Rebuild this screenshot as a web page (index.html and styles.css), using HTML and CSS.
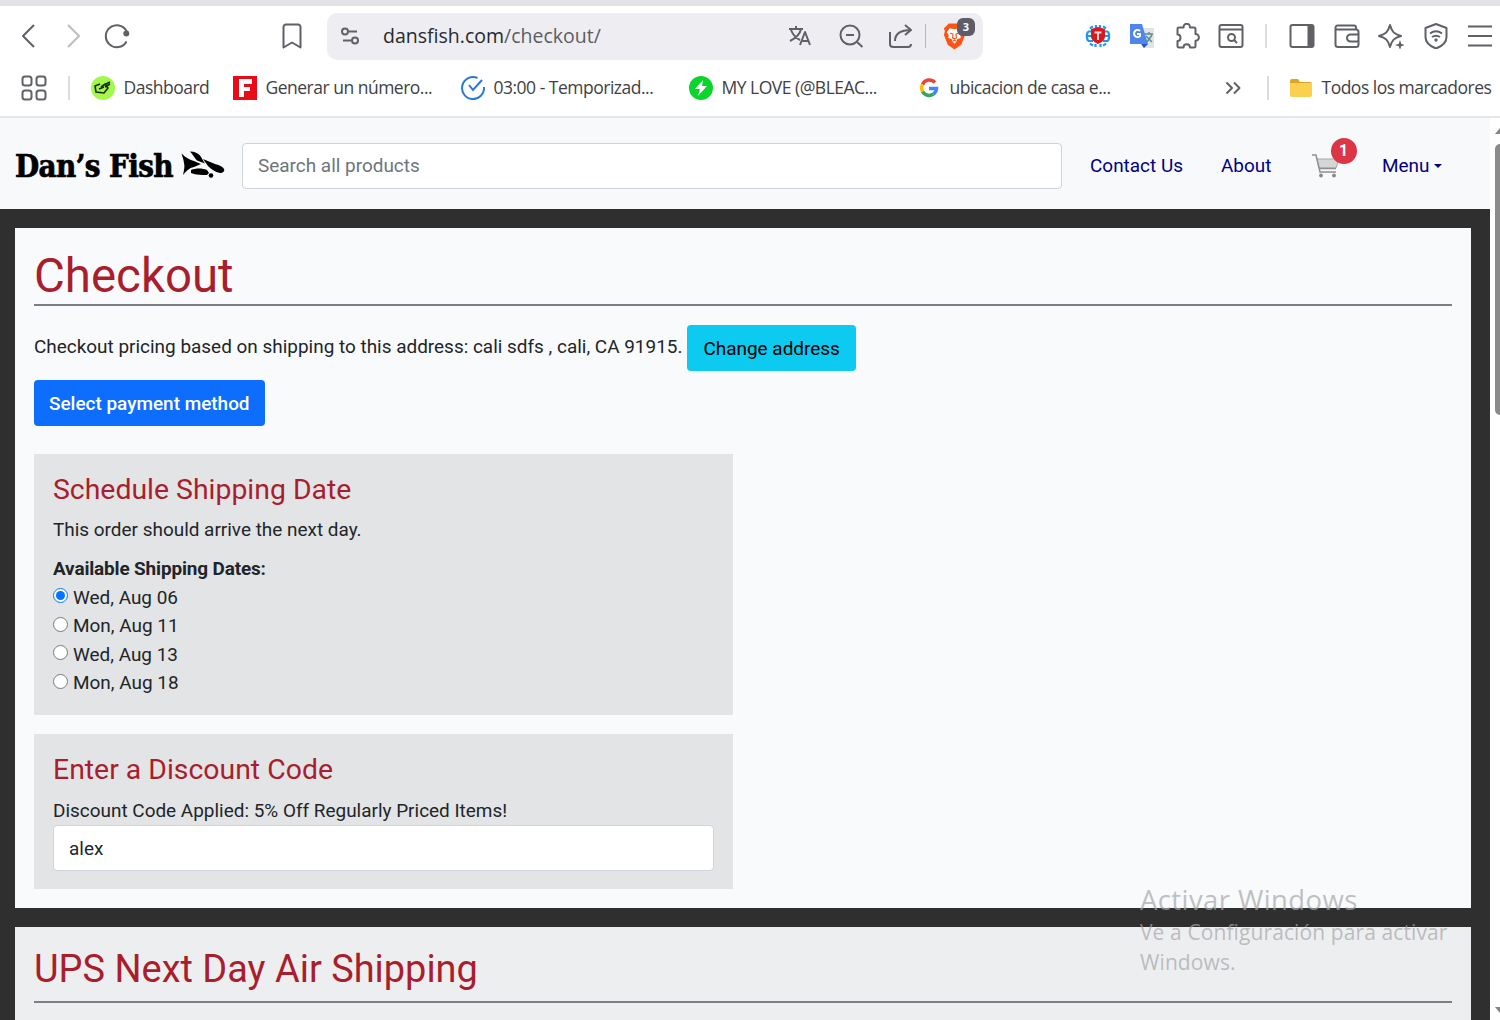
FILE: index.html
```html
<!DOCTYPE html>
<html lang="en">
<head>
    <meta charset="UTF-8">
    <meta name="viewport" content="width=device-width, initial-scale=1.0">
    <title>Checkout - Dan's Fish</title>
    <link rel="stylesheet" href="styles.css">
</head>
<body>

<!-- Browser bars -->
<div class="browser">
    <div class="toolbar">
        <div class="nav-icons">
            <svg class="icon" viewBox="0 0 26 26"><path d="M18 2 7 13l11 11"/></svg>
            <svg class="icon faded" viewBox="0 0 26 26"><path d="M8 2l11 11L8 24"/></svg>
            <svg class="icon" viewBox="0 0 26 26"><path d="M22.500 18.500a11 11 0 1 1 1-8"/><circle class="fill" cx="22.300" cy="10.500" r="2"/></svg>
        </div>
        <svg class="icon save" viewBox="0 0 26 26"><path d="M7 1.500h12a2.500 2.500 0 0 1 2.500 2.500v20.500L13 19.500l-8.500 5V4A2.500 2.500 0 0 1 7 1.500z"/></svg>
        <div class="address-bar">
            <svg class="icon tune" viewBox="0 0 26 26"><circle cx="8" cy="8.500" r="3"/><path d="M12 8.500h8M6 17.500h8"/><circle cx="18" cy="17.500" r="3"/></svg>
            <span class="url"><span class="host">dansfish.com</span>/checkout/</span>
            <div class="address-icons">
                <svg class="icon" viewBox="0 0 26 26"><path d="M2 6h14M9 3v3M4 7c2 5 5 8 9 10M14 6c-1 5-5 9-11 12M13 22l5-13 5 13M15 18h6"/></svg>
                <svg class="icon" viewBox="0 0 26 26"><circle cx="12" cy="12" r="9.500"/><path d="M8 12h8M19 19l5.500 5"/></svg>
                <svg class="icon" viewBox="0 0 26 26"><path d="M2 9v12a3 3 0 0 0 3 3h15a3 3 0 0 0 3-3M7 18c0-7 5-11 16-11M17 2l6 5-6 5"/></svg>
            </div>
            <span class="address-divider"></span>
            <div class="brave">
                <svg class="picture" viewBox="0 0 26 28"><path fill="#fb5417" d="M7 1h12l3 3 2 2-1 3 1 4-4 10-7 5-7-5L2 13l1-4-1-3 2-2z"/><path fill="#fff" d="M8 6l5 1 5-1 3 4-2 3 .5 3-3.500 1-1 3-2 2-2-2-1-3-3.500-1 .5-3-2-3z"/><path fill="none" stroke="#fb5417" stroke-width="1.200" d="M8.500 11l3 1-.5 4 2 1 2-1-.5-4 3-1M11 19.500l2-1 2 1"/></svg>
                <span class="brave-count">3</span>
            </div>
        </div>
        <div class="extensions">
            <svg class="picture" viewBox="0 0 26 26"><path fill="none" stroke="#2096f3" stroke-width="2.200" d="M8 3.500A11 11 0 0 0 5 5.500M18 3.500a11 11 0 0 1 3 2M8 22.500a11 11 0 0 1-3-2M18 22.500a11 11 0 0 0 3-2M3 8.500h4M19 8.500h4M1.500 13H6M20 13h4.500M3 18h5M18 18h5M11 2v3M15 2v3M10.500 24v-3M15.500 24v-3M3 8.500A11 11 0 0 0 3 18M23 8.500a11 11 0 0 1 0 9.500"/><path fill="#d71920" d="M13 4l7 2v7c0 4-3 6-7 8-4-2-7-4-7-8V6z"/><path stroke="#f6d5d5" stroke-width="2" d="M9.500 9.500h7M13 9v8"/></svg>
            <svg class="picture" viewBox="0 0 26 26"><path fill="#e2e3e5" d="M11 5h14v20H14z"/><path fill="#4f86ec" d="M1 1h12l6 20H1z"/><path fill="#2554c7" d="M12 21h7l-4 4z"/><path fill="none" stroke="#fff" stroke-width="2" d="M11 8a3.500 3.500 0 1 0 0 5v-2H8"/><path fill="none" stroke="#5e8c8c" stroke-width="1.500" d="M16 11h8M20 9v2M17 13l6 6M23 12l-5 7"/></svg>
            <svg class="icon" viewBox="0 0 26 26"><path d="M5 4.500h4.500V4a3 3 0 0 1 6.500 0v.5h4a1.500 1.500 0 0 1 1.500 1.500v5a3.400 3.400 0 0 1 0 6.800V23a1.500 1.500 0 0 1-1.500 1.500h-4c0-4.500-6.500-4.500-6.500 0H5A1.500 1.500 0 0 1 3.500 23v-5c4 0 4-6.500 0-6.500V6A1.500 1.500 0 0 1 5 4.500z"/></svg>
            <svg class="icon" viewBox="0 0 26 26"><rect x="1.500" y="2" width="23" height="22" rx="2"/><path d="M2 6.500h22"/><circle cx="13.500" cy="14.500" r="3.500"/><path d="M16 17l3 3"/></svg>
        </div>
        <span class="divider"></span>
        <div class="extensions">
            <svg class="icon" viewBox="0 0 26 26"><rect x="1.500" y="2" width="23" height="22" rx="2"/><path class="fill" d="M19.500 3H24v20h-4.500z"/></svg>
            <svg class="icon" viewBox="0 0 26 26"><path d="M2 6.500h20a2.500 2.500 0 0 1 2.500 2.500v12.500A2.500 2.500 0 0 1 22 24H4a2.500 2.500 0 0 1-2.500-2.500v-17A2 2 0 0 1 3.500 2.500H20a2 2 0 0 1 2 2v2"/><path d="M24.500 11.500h-8a3.500 3.500 0 0 0 0 7h8"/></svg>
            <svg class="icon" viewBox="0 0 26 26"><path d="M12 2c2 7 4 9 11 11-7 2-9 4-11 11-2-7-4-9-11-11 7-2 9-4 11-11z"/><path class="halo" d="M17 17h9v9h-9z"/><path class="fill star" d="M22 17l1.200 3.800L27 22l-3.800 1.200L22 27l-1.200-3.800L17 22l3.800-1.200z"/></svg>
            <svg class="icon" viewBox="0 0 26 26"><path d="M13 1l10.500 4v9c0 5-4 9-10.500 11.500C6.500 23 2.500 19 2.500 14V5z"/><path d="M7 10.500c4-3 8-3 12 0M9 14c3-2 5-2 8 0"/><circle class="fill" cx="13" cy="17" r=".7"/></svg>
            <svg class="icon" viewBox="0 0 26 26"><path d="M1 3.500h24M1 13h24M1 22.500h24"/></svg>
        </div>
    </div>

    <div class="bookmarks">
        <svg class="icon apps" viewBox="0 0 26 26"><rect x="1.500" y="1.500" width="9" height="9" rx="2.500"/><rect x="15.500" y="1.500" width="9" height="9" rx="2.500"/><rect x="1.500" y="15.500" width="9" height="9" rx="2.500"/><rect x="15.500" y="15.500" width="9" height="9" rx="2.500"/></svg>
        <span class="divider"></span>
        <a class="bookmark dashboard"><svg class="favicon" viewBox="0 0 24 24"><circle cx="12" cy="12" r="12" fill="#a3f84c"/><path fill="none" stroke="#1c2b10" stroke-width="1.600" d="M9 8l-5 2 1 6 8 1 4-5-3-4-4 3M8 13l5-2M13 9l6-3M14 11l5-3"/></svg><span>Dashboard</span></a>
        <a class="bookmark generar"><svg class="favicon" viewBox="0 0 24 24"><path fill="#e90c16" d="M0 0h24v24H0z"/><path fill="#fff" d="M6 3h13v5h-8v3h6v4h-6v6H6z"/></svg><span>Generar un número...</span></a>
        <a class="bookmark timer"><svg class="favicon" viewBox="0 0 24 24"><path fill="none" stroke="#2d78d0" stroke-width="2" d="M16.500 2A11 11 0 1 0 23 11M8 9l4 5 9-10"/></svg><span>03:00 - Temporizad...</span></a>
        <a class="bookmark love"><svg class="favicon" viewBox="0 0 24 24"><circle cx="12" cy="12" r="12" fill="#0bd52c"/><path fill="#fff" d="M14 4l-8 9h5l-2 7 9-10h-5z"/></svg><span>MY LOVE (@BLEAC...</span></a>
        <a class="bookmark casa"><svg class="favicon" viewBox="0 0 24 24"><g fill="none" stroke-width="3.500"><path stroke="#ea4335" d="M18 6.500A7.500 7.500 0 0 0 5.500 8.500"/><path stroke="#fbbc05" d="M5.500 8.500a7.500 7.500 0 0 0 0 7"/><path stroke="#34a853" d="M5.500 15.500a7.500 7.500 0 0 0 11 2.500"/><path stroke="#4285f4" d="M16.500 18a7.500 7.500 0 0 0 3-5.500H12"/></g></svg><span>ubicacion de casa e...</span></a>
        <svg class="icon more" viewBox="0 0 26 26"><path d="M6.500 7.500L12 13l-5.500 5.500M14 7.500l5.500 5.500-5.500 5.500"/></svg>
        <span class="divider"></span>
        <a class="bookmark folder"><svg class="favicon" viewBox="0 0 24 24"><path fill="#dba528" d="M1 5a2 2 0 0 1 2-2h6l2 3h10a2 2 0 0 1 2 2v12H1z"/><path fill="#fbd04f" d="M1 7h22v12a2 2 0 0 1-2 2H3a2 2 0 0 1-2-2z"/></svg><span>Todos los marcadores</span></a>
    </div>
</div>

<div class="viewport">
    <div class="page">
        <header class="site-header">
            <a class="logo">
                <span class="logo-text">Dan’s Fish</span>
                <svg class="logo-fish" viewBox="0 0 44 27"><path d="M.5 2.500C5 7 9 9 13 10l7 3-7 3c-5 1-8 4-11 8 1-5 2-9 1-12-.5-4-1.500-6-2.500-9.500z"/><path d="M9 .5c5 0 8 2 10 4 2 3 3 5 5 8l-8-3c-2-2-4-6-7-9z"/><path d="M22 8l12 5c5 1 8 3 9 5s-1 4-4 4c-5-1-9-4-12-7z"/><path d="M10 19c5-2 11-2 16 0l2 3-2 2c-5 0-11 0-16-2z"/><circle cx="30" cy="24.500" r="2.300"/></svg>
            </a>
            <input class="search" type="text" placeholder="Search all products">
            <a class="nav-link contact">Contact Us</a>
            <a class="nav-link about">About</a>
            <a class="cart">
                <svg viewBox="0 0 28 24"><path fill="#d6d6d6" stroke="#a8a8a8" d="M5 5h22l-3 9H7z"/><path fill="none" stroke="#8f8f8f" stroke-width="1.500" d="M0 1h4l4 17h16M7 14.500h17"/><circle cx="9" cy="21.500" r="1.900" fill="#888"/><circle cx="22" cy="21.500" r="1.900" fill="#888"/></svg>
                <span class="cart-badge">1</span>
            </a>
            <a class="nav-link menu">Menu</a>
        </header>

        <main class="content">
            <section class="panel checkout">
                <h1>Checkout</h1>
                <div class="address-line">
                    <span>Checkout pricing based on shipping to this address: cali sdfs , cali, CA 91915.</span>
                    <button class="btn btn-info">Change address</button>
                </div>
                <button class="btn btn-primary">Select payment method</button>

                <div class="box shipping">
                    <h3>Schedule Shipping Date</h3>
                    <p>This order should arrive the next day.</p>
                    <p class="dates-title">Available Shipping Dates:</p>
                    <label class="date"><input type="radio" name="shipDate" checked><span>Wed, Aug 06</span></label>
                    <label class="date"><input type="radio" name="shipDate"><span>Mon, Aug 11</span></label>
                    <label class="date"><input type="radio" name="shipDate"><span>Wed, Aug 13</span></label>
                    <label class="date"><input type="radio" name="shipDate"><span>Mon, Aug 18</span></label>
                </div>

                <div class="box discount">
                    <h3>Enter a Discount Code</h3>
                    <p>Discount Code Applied: 5% Off Regularly Priced Items!</p>
                    <input class="code" type="text" value="alex">
                </div>
            </section>

            <section class="panel ups">
                <h2>UPS Next Day Air Shipping</h2>
            </section>
        </main>
    </div>

    <div class="scrollbar">
        <span class="arrow-up"></span>
        <span class="thumb"></span>
        <span class="arrow-down"></span>
    </div>
</div>

<div class="watermark">
    <div class="watermark-title">Activar Windows</div>
    <div class="watermark-text">Ve a Configuración para activar<br>Windows.</div>
</div>

</body>
</html>
```
FILE: styles.css
```css
* {
    box-sizing: border-box;
}

body {
    margin: 0;
    height: 1020px;
    display: flex;
    flex-direction: column;
    overflow: hidden;
    font-family: Roboto, Arial, sans-serif;
    font-size: 18.95px;
    color: #212529;
    background-color: #fff;
}

svg {
    display: block;
    flex-shrink: 0;
}

/* Browser bars */
.browser {
    height: 118px;
    flex-shrink: 0;
    border-top: 6px solid #e3e2e7;
    border-bottom: 2px solid #e6e6ea;
    font-family: "Open Sans", "Noto Sans", sans-serif;
    color: #3f4145;
}

.toolbar {
    height: 60px;
    display: flex;
    align-items: center;
    padding-left: 16px;
}

.icon {
    width: 26px;
    height: 26px;
    fill: none;
    stroke: #5f6167;
    stroke-width: 2;
    stroke-linejoin: round;
}

.icon .fill {
    fill: #5f6167;
    stroke: #5f6167;
}

.icon .star {
    stroke: none;
}

.icon .halo {
    fill: #fff;
    stroke: none;
}

.faded {
    stroke: #bcbdc1;
}

.picture {
    width: 26px;
    height: 26px;
}

.nav-icons {
    display: flex;
    gap: 18px;
}

.save {
    margin-left: 149px;
}

.address-bar {
    width: 656px;
    height: 47px;
    margin-left: 22px;
    padding-left: 10px;
    display: flex;
    align-items: center;
    background-color: #eeedf2;
    border-radius: 10px;
}

.url {
    width: 404px;
    margin-left: 20px;
    padding-bottom: 1px;
    font-size: 19.5px;
    color: #5b5d63;
}

.host {
    color: #27292d;
}

.address-icons {
    display: flex;
    gap: 24.500px;
}

.address-divider {
    width: 1px;
    height: 24px;
    margin-left: 11px;
    background-color: #b6b6bd;
}

.brave {
    position: relative;
    margin-left: 16px;
}

.brave .picture {
    width: 25px;
    height: 28px;
}

.brave-count {
    position: absolute;
    left: 15px;
    top: -4px;
    width: 18px;
    height: 18px;
    line-height: 18px;
    text-align: center;
    font-size: 11px;
    font-weight: bold;
    color: #fff;
    background-color: #5c5d69;
    border-radius: 6px;
}

.extensions {
    display: flex;
    gap: 18.500px;
}

.address-bar + .extensions {
    margin-left: 101.500px;
}

.divider {
    width: 2px;
    height: 24px;
    background-color: #dcdce2;
}

.toolbar .divider {
    margin: 0 22px 0 21px;
}

.bookmarks {
    height: 44px;
    display: flex;
    align-items: center;
    padding-left: 21px;
    font-size: 17.5px;
    letter-spacing: -0.5px;
}

.bookmarks .divider {
    margin-left: 21px;
}

.bookmark {
    display: flex;
    align-items: center;
    gap: 8.500px;
    white-space: nowrap;
}

.bookmark span {
    padding-bottom: 2px;
}

.favicon {
    width: 24px;
    height: 24px;
}

.dashboard {
    width: 142px;
    margin-left: 21px;
}

.generar {
    width: 228px;
}

.timer {
    width: 228px;
}

.love {
    width: 228px;
}

.casa {
    width: 303px;
}

.folder {
    margin-left: 20px;
}

/* Page */
.viewport {
    flex: 1;
    min-height: 0;
    display: flex;
}

.page {
    width: 1490px;
    overflow: hidden;
    background-color: #2f2f2f;
}

.site-header {
    height: 91px;
    display: flex;
    align-items: center;
    padding: 4px 0 0 15px;
    background-color: #f8f9fb;
}

.logo {
    width: 227px;
    display: flex;
    align-items: center;
    gap: 7px;
}

.logo-text {
    width: 159px;
    white-space: nowrap;
    font-family: "DejaVu Serif Condensed", "DejaVu Serif", serif;
    font-weight: bold;
    font-size: 31px;
    letter-spacing: -0.6px;
    -webkit-text-stroke: 0.7px #000;
    color: #000;
}

.logo-fish {
    width: 44px;
    height: 27px;
    margin-top: -2px;
}

.search,
.code {
    height: 46px;
    padding: 0 15px;
    font: inherit;
    color: #212529;
    background-color: #fff;
    border: 1px solid #ced4da;
    border-radius: 4px;
}

.search {
    width: 820px;
}

.search::placeholder {
    color: #6c757d;
}

.nav-link {
    color: #000080;
    white-space: nowrap;
}

.contact {
    width: 131px;
    margin-left: 28px;
}

.about {
    width: 91px;
}

.cart {
    position: relative;
    width: 70px;
}

.cart svg {
    width: 28px;
    height: 24px;
}

.cart-badge {
    position: absolute;
    left: 18.500px;
    top: -16px;
    width: 26px;
    height: 26px;
    line-height: 26px;
    text-align: center;
    font-size: 16px;
    font-weight: bold;
    color: #fff;
    background-color: #dc3545;
    border-radius: 50%;
}

.menu::after {
    content: "";
    display: inline-block;
    margin-left: 5px;
    vertical-align: 4px;
    border-top: 4px solid;
    border-left: 4px solid transparent;
    border-right: 4px solid transparent;
}

.content {
    padding: 19px 19px 0 15px;
}

.panel {
    padding: 0 19px;
    background-color: #f9fafc;
}

.checkout {
    height: 680px;
}

h1,
h2,
h3,
p {
    margin: 0;
    font-weight: normal;
}

h1,
h2,
h3 {
    color: #a91e2c;
}

h1,
h2 {
    border-bottom: 2px solid #7b7e84;
}

h1 {
    height: 78px;
    padding-top: 20px;
    font-size: 47.400px;
    line-height: 56px;
}

.address-line {
    height: 46px;
    margin: 19px 0 9px;
    display: flex;
    align-items: center;
    gap: 5px;
}

.address-line span {
    padding-bottom: 3px;
}

.btn {
    height: 46px;
    padding: 0 16px;
    border: none;
    border-radius: 4px;
    font: inherit;
    cursor: pointer;
}

.btn-info {
    color: #000;
    background-color: #0dcaf0;
}

.btn-primary {
    display: block;
    padding: 0 15px;
    font-weight: 500;
    color: #fff;
    background-color: #0d6efd;
}

.box {
    width: 699px;
    padding: 0 19px;
    background-color: #e3e4e6;
}

.shipping {
    height: 261px;
    margin-top: 28px;
    padding-top: 18px;
}

h3 {
    font-size: 28.400px;
    line-height: 36px;
}

.shipping p {
    line-height: 28px;
    margin-top: 8px;
}

.shipping .dates-title {
    margin-top: 11px;
    font-weight: bold;
    letter-spacing: -0.15px;
}

.date {
    height: 28.500px;
    display: flex;
    align-items: center;
}

.date input {
    width: 15px;
    height: 15px;
    margin: 0 5.500px 3px -0.5px;
}

.discount {
    height: 155px;
    margin-top: 19px;
    padding-top: 18px;
}

.discount p {
    line-height: 28px;
    margin-top: 9px;
}

.code {
    display: block;
    width: 661px;
}

.ups {
    height: 120px;
    margin-top: 19px;
    background-color: #edeef0;
}

h2 {
    height: 76px;
    padding-top: 19px;
    font-size: 37.950px;
    line-height: 46px;
}

.scrollbar {
    width: 10px;
    display: flex;
    flex-direction: column;
    align-items: flex-end;
    overflow: hidden;
    background-color: #fff;
}

.arrow-up,
.arrow-down {
    width: 5px;
    height: 6px;
    background-color: #858585;
    clip-path: polygon(100% 0, 100% 100%, 0 100%);
}

.arrow-up {
    margin-top: 10px;
}

.thumb {
    width: 5px;
    height: 271px;
    margin-top: 10px;
    background-color: #8b8b8b;
    border-radius: 5px 0 0 5px;
}

.arrow-down {
    margin-top: 592px;
    clip-path: polygon(0 0, 100% 0, 100% 100%);
}

/* Windows activation notice, drawn over everything */
.watermark {
    position: absolute;
    left: 1140px;
    top: 882px;
    font-family: "Open Sans", "Noto Sans", sans-serif;
    color: rgba(165, 165, 168, 0.7);
    white-space: nowrap;
}

.watermark-title {
    font-size: 27.500px;
    line-height: 36px;
    letter-spacing: 0.4px;
}

.watermark-text {
    font-size: 21px;
    line-height: 29.500px;
    letter-spacing: 0.1px;
}
```
